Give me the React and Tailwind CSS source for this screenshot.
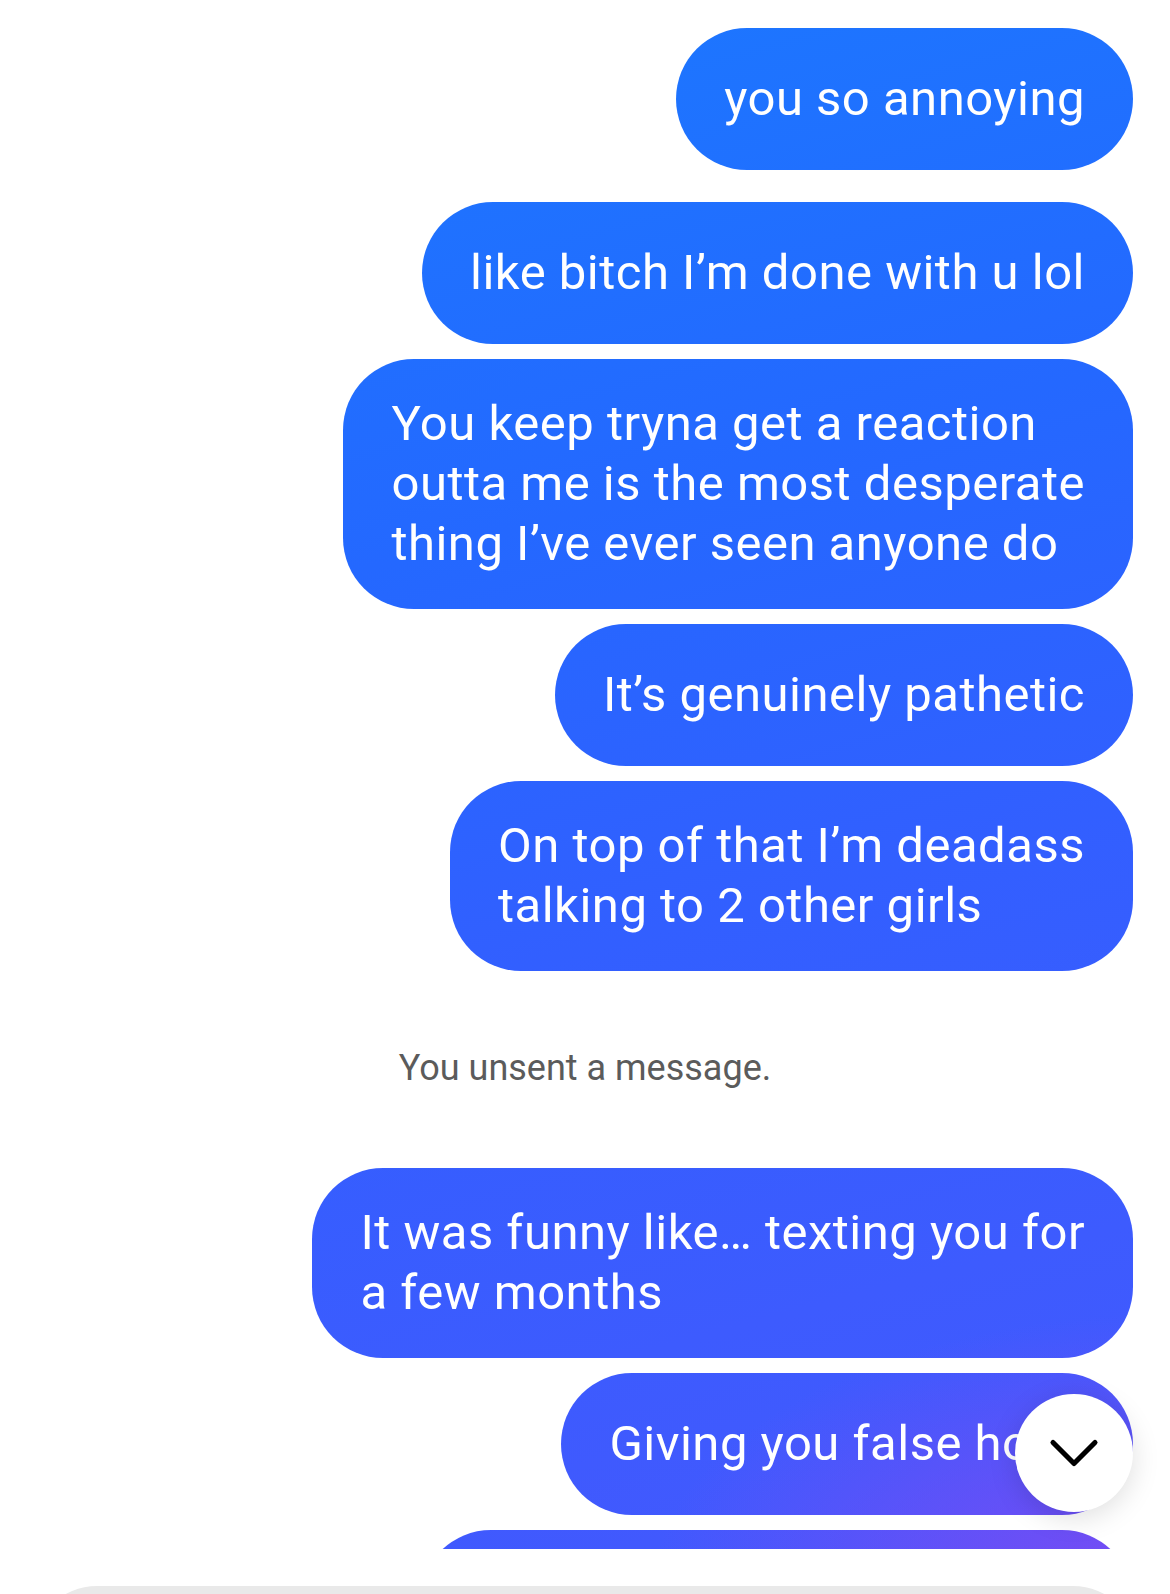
import React from 'react';
import { ChevronDown } from 'lucide-react';

// Outgoing bubbles share one gradient pinned to the viewport, so colour shifts down the thread
const bubbleBg =
  'bg-fixed bg-[radial-gradient(520px_280px_at_100%_100%,rgba(128,74,242,0.95),rgba(128,74,242,0)),linear-gradient(165deg,#1a7bff_0%,#2468ff_35%,#325fff_58%,#3d5bfe_80%,#4557fd_100%)]';

const messages = [
  { id: 1, lines: ['you so annoying'], gap: 'mt-0' },
  { id: 2, lines: ['like bitch I’m done with u lol'], gap: 'mt-[32px]' },
  {
    id: 3,
    lines: ['You keep tryna get a reaction', 'outta me is the most desperate', 'thing I’ve ever seen anyone do'],
  },
  { id: 4, lines: ['It’s genuinely pathetic'] },
  { id: 5, lines: ['On top of that I’m deadass', 'talking to 2 other girls'] },
  { id: 'unsent' },
  { id: 6, lines: ['It was funny like… texting you for', 'a few months'], gap: 'mt-0' },
  { id: 7, lines: ['Giving you false hope'] },
  { id: 8, lines: ['And you actually believed it.'] },
];

const Bubble = ({ lines, gap = 'mt-[15px]' }) => (
  <div
    className={`${gap} ${bubbleBg} min-h-[142px] flex items-center rounded-[71px] px-[48px] py-[35px] text-white text-[49px] leading-[60px] tracking-[0.5px] whitespace-nowrap`}
  >
    <p>
      {lines.map((line, i) => (
        <React.Fragment key={i}>
          {i > 0 && <br />}
          {line}
        </React.Fragment>
      ))}
    </p>
  </div>
);

const App = () => {
  return (
    <div
      className="relative w-[1170px] h-[1594px] overflow-hidden bg-white"
      style={{ fontFamily: 'Roboto, "Noto Sans", sans-serif' }}
    >
      {/* Thread */}
      <div className="h-[1549px] overflow-hidden">
        <div className="flex flex-col items-end px-[37px] pt-[28px]">
          {messages.map((m) =>
            m.id === 'unsent' ? (
              <p
                key={m.id}
                className="self-stretch text-center text-[#5b5b5b] text-[36px] leading-[44px] mt-[75px] mb-[78px]"
              >
                You unsent a message.
              </p>
            ) : (
              <Bubble key={m.id} lines={m.lines} gap={m.gap} />
            )
          )}
        </div>
      </div>

      {/* Jump to latest */}
      <button
        type="button"
        className="absolute right-[37px] top-[1394px] w-[118px] h-[118px] rounded-full bg-white flex items-center justify-center shadow-[0_6px_28px_rgba(0,0,0,0.13)]"
      >
        <ChevronDown size={84} strokeWidth={1.45} className="text-black" />
      </button>

      {/* Composer */}
      <div className="mt-[37px] mx-[32px] h-[130px] rounded-[65px] bg-[#e9e9e9]" />
    </div>
  );
};

export default App;
